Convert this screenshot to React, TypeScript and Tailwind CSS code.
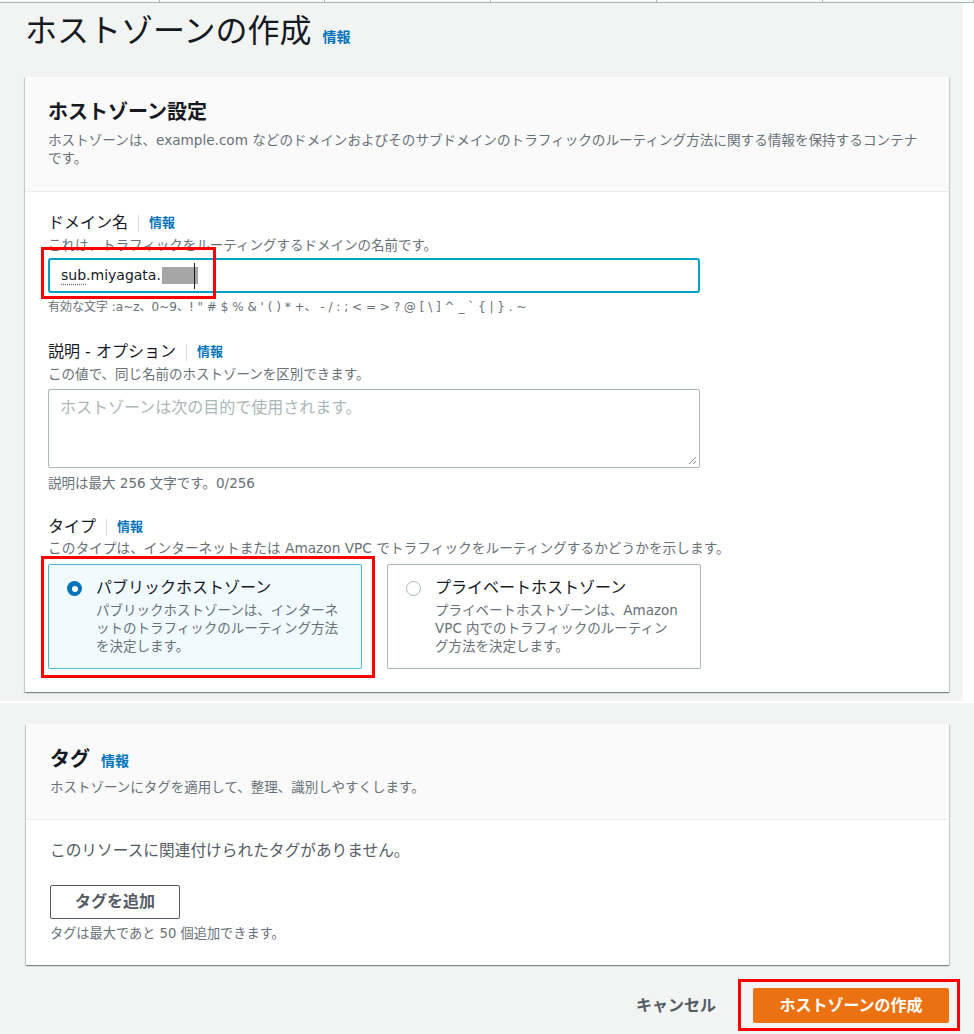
import React from 'react';

function InfoLink({ className = '' }: { className?: string }) {
  return <span className={`text-[13px] font-bold text-[#0073bb] ${className}`}>情報</span>;
}

function FieldLabel({ label }: { label: string }) {
  return (
    <div className="flex h-[22px] items-center">
      <span className="text-[16px] leading-[22px] text-[#16191f]">{label}</span>
      <span className="mx-[10px] h-[17px] w-px bg-[#d5dbdb]" />
      <InfoLink />
    </div>
  );
}

function RedBox({ className }: { className: string }) {
  return <div className={`pointer-events-none absolute border-[3px] border-[#ff0000] ${className}`} />;
}

function Tile({
  checked,
  title,
  lines,
}: {
  checked: boolean;
  title: string;
  lines: string[];
}) {
  return (
    <div
      className={`flex h-[105px] w-[314px] gap-[14px] rounded-[2px] border pl-[18px] pt-[12px] ${
        checked ? 'border-[#44b9d6] bg-[#f1faff]' : 'border-[#aab7b8] bg-white'
      }`}
    >
      <div className="pt-[4px]">
        {checked ? (
          <div className="flex h-[15px] w-[15px] items-center justify-center rounded-full bg-[#0073bb]">
            <div className="h-[6px] w-[6px] rounded-full bg-white" />
          </div>
        ) : (
          <div className="h-[15px] w-[15px] rounded-full border-[1.5px] border-[#aab7b8] bg-white" />
        )}
      </div>
      <div>
        <div className="text-[16px] leading-[22px] text-[#16191f]">{title}</div>
        <div className="mt-[2px] text-[13.5px] leading-[18px] text-[#687078]">
          {lines.map((l) => (
            <div key={l} className="whitespace-nowrap">
              {l}
            </div>
          ))}
        </div>
      </div>
    </div>
  );
}

export default function App() {
  const cardShadow =
    'shadow-[0_1px_1px_0_rgba(0,28,36,0.3),1px_1px_1px_0_rgba(0,28,36,0.15),-1px_1px_1px_0_rgba(0,28,36,0.15)]';

  return (
    <div className="relative h-[1034px] w-[974px] overflow-hidden bg-[#f2f3f3] font-['DejaVu_Sans','Noto_Sans_CJK_JP',sans-serif] text-[#16191f]">
      {/* top table strip */}
      <div className="flex h-[3px] border-b border-[#aab7b8] bg-[#fafafa]">
        {[160, 165, 166, 166, 166, 151].map((w, i) => (
          <div key={i} style={{ width: w }} className="h-full border-r border-[#aab7b8]" />
        ))}
      </div>

      <div className="flex">
        <div className="w-[963px] pb-[9px] pl-[25px] pr-[14px]">
          <div className="box-content flex h-[40px] items-baseline gap-[11px] pt-[8px]">
            <h1 className="text-[32px] leading-[40px] font-normal text-[#16191f]">ホストゾーンの作成</h1>
            <InfoLink className="text-[14px]" />
          </div>

          {/* card 1 */}
          <div className={`relative mt-[26px] bg-white ${cardShadow}`}>
            <div className="border-b border-[#eaeded] bg-[#fafafa] px-[23px] pb-[24px] pt-[21px]">
              <h2 className="text-[20px] leading-[28px] font-bold">ホストゾーン設定</h2>
              <p className="mt-[5px] whitespace-nowrap text-[13.6px] leading-[18px] text-[#687078]">
                ホストゾーンは、example.com などのドメインおよびそのサブドメインのトラフィックのルーティング方法に関する情報を保持するコンテナ
                <br />
                です。
              </p>
            </div>

            <div className="px-[23px] pb-[23px] pt-[20px]">
              {/* domain name */}
              <FieldLabel label="ドメイン名" />
              <p className="mt-[2px] text-[13.5px] leading-[18px] text-[#687078]">
                これは、トラフィックをルーティングするドメインの名前です。
              </p>
              <div className="mt-[4px] flex h-[35px] w-[652px] items-center rounded-[3px] border-2 border-[#00a1c9] bg-white pl-[11px]">
                <span className="text-[14px] text-[#16191f]">
                  <span className="underline decoration-dotted decoration-[#687078] underline-offset-4">sub</span>
                  .miyagata.
                </span>
                <span className="ml-px h-[17px] w-[36px] bg-[#a6a6a6]" />
                <span className="-ml-[4px] h-[26px] w-px bg-[#16191f]" />
              </div>
              <p className="mt-[6px] whitespace-nowrap text-[12px] leading-[16px] text-[#687078]">
                有効な文字 :a~z、0~9、! " # $ % &amp; ' ( ) * +、 - / : ; &lt; = &gt; ? @ [ \ ] ^ _ ` {'{'} | {'}'} . ~
              </p>

              {/* description */}
              <div className="mt-[26px]">
                <FieldLabel label="説明 - オプション" />
              </div>
              <p className="mt-[2px] text-[13.5px] leading-[18px] text-[#687078]">
                この値で、同じ名前のホストゾーンを区別できます。
              </p>
              <div className="relative mt-[6px] h-[79px] w-[652px] rounded-[2px] border border-[#aab7b8] bg-white px-[11px] pt-[6px]">
                <span className="text-[16px] leading-[22px] text-[#aab7b8]">
                  ホストゾーンは次の目的で使用されます。
                </span>
                <svg className="absolute bottom-[2px] right-[2px]" width="9" height="9" viewBox="0 0 9 9">
                  <path d="M8 1 L1 8 M8 5 L5 8" stroke="#8d9696" strokeWidth="1" />
                </svg>
              </div>
              <p className="mt-[7px] text-[13.5px] leading-[16px] text-[#687078]">
                説明は最大 256 文字です。0/256
              </p>

              {/* type */}
              <div className="mt-[25px]">
                <FieldLabel label="タイプ" />
              </div>
              <p className="mt-[1px] whitespace-nowrap text-[13.7px] leading-[18px] text-[#687078]">
                このタイプは、インターネットまたは Amazon VPC でトラフィックをルーティングするかどうかを示します。
              </p>
              <div className="mt-[7px] flex gap-[25px]">
                <Tile
                  checked
                  title="パブリックホストゾーン"
                  lines={[
                    'パブリックホストゾーンは、インターネ',
                    'ットのトラフィックのルーティング方法',
                    'を決定します。',
                  ]}
                />
                <Tile
                  checked={false}
                  title="プライベートホストゾーン"
                  lines={[
                    'プライベートホストゾーンは、Amazon',
                    'VPC 内でのトラフィックのルーティン',
                    'グ方法を決定します。',
                  ]}
                />
              </div>
            </div>
          </div>
        </div>
        <div className="flex-1 bg-white" />
      </div>

      <div className="h-[2px] bg-white" />

      {/* bottom section */}
      <div className="pl-[26px] pr-[25px] pt-[21px]">
        <div className={`bg-white ${cardShadow}`}>
          <div className="border-b border-[#eaeded] bg-[#fafafa] px-[24px] pb-[23px] pt-[21px]">
            <div className="flex items-baseline gap-[11px]">
              <h2 className="text-[20px] leading-[28px] font-bold">タグ</h2>
              <InfoLink className="text-[14px]" />
            </div>
            <p className="mt-[5px] text-[13.5px] leading-[18px] text-[#687078]">
              ホストゾーンにタグを適用して、整理、識別しやすくします。
            </p>
          </div>
          <div className="px-[24px] pb-[23px] pt-[20px]">
            <p className="text-[15.7px] leading-[22px] text-[#545b64]">
              このリソースに関連付けられたタグがありません。
            </p>
            <button className="mt-[23px] flex h-[34px] w-[130px] items-center justify-center rounded-[2px] border border-[#545b64] bg-white text-[16px] font-bold text-[#545b64]">
              タグを追加
            </button>
            <p className="mt-[7px] text-[13.2px] leading-[16px] text-[#687078]">
              タグは最大であと 50 個追加できます。
            </p>
          </div>
        </div>

        <div className="mt-[23px] flex items-center justify-end gap-[37px]">
          <span className="text-[16px] font-bold text-[#545b64]">キャンセル</span>
          <button className="flex h-[35px] w-[196px] items-center justify-center rounded-[2px] bg-[#ec7211] text-[16px] font-bold text-white">
            ホストゾーンの作成
          </button>
        </div>
      </div>

      {/* red annotation boxes */}
      <RedBox className="left-[41px] top-[247px] h-[52px] w-[175px]" />
      <RedBox className="left-[41px] top-[556px] h-[122px] w-[334px]" />
      <RedBox className="left-[738px] top-[979px] h-[52px] w-[222px]" />
    </div>
  );
}
